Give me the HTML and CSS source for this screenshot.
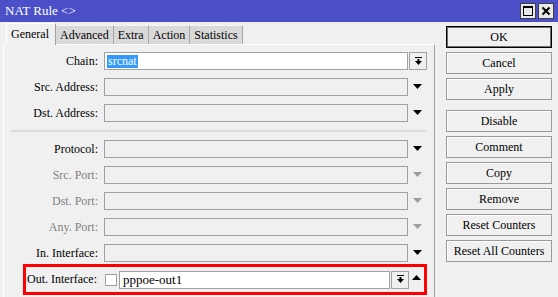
FILE: index.html
```html
<!DOCTYPE html>
<html lang="en">
<head>
    <meta charset="UTF-8">
    <title>NAT Rule</title>
    <link rel="stylesheet" href="styles.css">
</head>
<body>
    <div class="window">
        <div class="titlebar">
            <span class="title">NAT Rule &lt;&gt;</span>
            <div class="win-btns">
                <span class="win-btn"><svg width="12" height="12" viewBox="0 0 12 12"><rect x="1.5" y="1.5" width="9" height="9" fill="none" stroke="#000" stroke-width="1"/><rect x="1" y="1" width="10" height="2" fill="#000"/></svg></span>
                <span class="win-btn"><svg width="12" height="12" viewBox="0 0 12 12"><path d="M2.5 2.5 L9.5 9.5 M9.5 2.5 L2.5 9.5" stroke="#000" stroke-width="2"/></svg></span>
            </div>
        </div>
        <div class="main">
            <div class="left">
                <div class="tabs">
                    <span class="tab active">General</span>
                    <span class="tab">Advanced</span>
                    <span class="tab">Extra</span>
                    <span class="tab">Action</span>
                    <span class="tab">Statistics</span>
                </div>
                <div class="panel">
                    <div class="row">
                        <label class="lbl">Chain:</label>
                        <div class="field active"><span class="sel">srcnat</span></div>
                        <span class="drop-btn"><svg width="9" height="9" viewBox="0 0 9 9"><rect x="1" y="0" width="7" height="1" fill="#000"/><rect x="3.5" y="2" width="2" height="2" fill="#000"/><path d="M1 4 H8 L4.5 8 Z" fill="#000"/></svg></span>
                    </div>
                    <div class="row">
                        <label class="lbl">Src. Address:</label>
                        <div class="field"></div>
                        <span class="arrow"><svg width="9" height="5" viewBox="0 0 9 5"><path d="M0 0 H9 L4.5 5 Z" fill="#000"/></svg></span>
                    </div>
                    <div class="row">
                        <label class="lbl">Dst. Address:</label>
                        <div class="field"></div>
                        <span class="arrow"><svg width="9" height="5" viewBox="0 0 9 5"><path d="M0 0 H9 L4.5 5 Z" fill="#000"/></svg></span>
                    </div>
                    <div class="sep"></div>
                    <div class="row">
                        <label class="lbl">Protocol:</label>
                        <div class="field"></div>
                        <span class="arrow"><svg width="9" height="5" viewBox="0 0 9 5"><path d="M0 0 H9 L4.5 5 Z" fill="#000"/></svg></span>
                    </div>
                    <div class="row">
                        <label class="lbl dim">Src. Port:</label>
                        <div class="field"></div>
                        <span class="arrow"><svg width="9" height="5" viewBox="0 0 9 5"><path d="M0 0 H9 L4.5 5 Z" fill="#9a9e99"/></svg></span>
                    </div>
                    <div class="row">
                        <label class="lbl dim">Dst. Port:</label>
                        <div class="field"></div>
                        <span class="arrow"><svg width="9" height="5" viewBox="0 0 9 5"><path d="M0 0 H9 L4.5 5 Z" fill="#9a9e99"/></svg></span>
                    </div>
                    <div class="row">
                        <label class="lbl dim">Any. Port:</label>
                        <div class="field"></div>
                        <span class="arrow"><svg width="9" height="5" viewBox="0 0 9 5"><path d="M0 0 H9 L4.5 5 Z" fill="#9a9e99"/></svg></span>
                    </div>
                    <div class="row">
                        <label class="lbl">In. Interface:</label>
                        <div class="field"></div>
                        <span class="arrow"><svg width="9" height="5" viewBox="0 0 9 5"><path d="M0 0 H9 L4.5 5 Z" fill="#000"/></svg></span>
                    </div>
                    <div class="highlight">
                        <label class="lbl out">Out. Interface:</label>
                        <span class="check"></span>
                        <div class="field active out-field">pppoe-out1</div>
                        <span class="drop-btn"><svg width="9" height="9" viewBox="0 0 9 9"><rect x="1" y="0" width="7" height="1" fill="#000"/><rect x="3.5" y="2" width="2" height="2" fill="#000"/><path d="M1 4 H8 L4.5 8 Z" fill="#000"/></svg></span>
                        <span class="arrow up"><svg width="9" height="5" viewBox="0 0 9 5"><path d="M0 5 H9 L4.5 0 Z" fill="#000"/></svg></span>
                    </div>
                </div>
            </div>
            <div class="actions">
                <button class="btn default">OK</button>
                <button class="btn">Cancel</button>
                <button class="btn">Apply</button>
                <button class="btn spaced">Disable</button>
                <button class="btn">Comment</button>
                <button class="btn">Copy</button>
                <button class="btn">Remove</button>
                <button class="btn">Reset Counters</button>
                <button class="btn">Reset All Counters</button>
            </div>
        </div>
    </div>
</body>
</html>
```
FILE: styles.css
```css
body {
    margin: 0;
    padding: 0;
    font-family: 'Liberation Serif', 'Times New Roman', serif;
    font-size: 12px;
    color: #000;
    background: #f0f0f0;
}
.window {
    width: 558px;
    height: 297px;
    overflow: hidden;
    background: #f0f0f0;
}
.titlebar {
    height: 22px;
    background: #4b50c8;
    display: flex;
    align-items: center;
    justify-content: space-between;
    padding: 0 4px 0 5px;
    box-sizing: border-box;
}
.title {
    color: #fff;
    font-size: 13px;
}
.win-btns {
    display: flex;
    gap: 2px;
}
.win-btn {
    width: 14px;
    height: 14px;
    background: #e8e8e8;
    border: 1px solid #404040;
    display: flex;
    align-items: center;
    justify-content: center;
}
.main {
    display: flex;
    height: 275px;
}
.left {
    margin-left: 3px;
    width: 432px;
    display: flex;
    flex-direction: column;
}
.tabs {
    display: flex;
    align-items: flex-end;
    height: 22px;
    padding-left: 3px;
}
.tab {
    height: 19px;
    line-height: 19px;
    padding: 0 4px;
    background: #d9d9d9;
    border-right: 1px solid #a8a8a8;
    border-top: 1px solid #f4f4f4;
    box-sizing: border-box;
}
.tab.active {
    height: 22px;
    line-height: 21px;
    margin-bottom: -1px;
    padding: 0 6px 0 4px;
    background: #f0f0f0;
    border-left: 1px solid #fff;
    border-top: 1px solid #fff;
    border-right: 1px solid #a0a0a0;
    position: relative;
    z-index: 1;
}
.panel {
    flex: 1;
    border-top: 1px solid #fff;
    border-left: 1px solid #fff;
    border-right: 1px solid #a0a0a0;
    padding-top: 7px;
    display: flex;
    flex-direction: column;
    gap: 8px;
}
.row {
    display: flex;
    align-items: center;
    height: 18px;
}
.lbl {
    width: 94px;
    flex-shrink: 0;
    text-align: right;
    padding-right: 6px;
    white-space: nowrap;
}
.lbl.dim {
    color: #808080;
}
.field {
    width: 304px;
    height: 18px;
    flex-shrink: 0;
    box-sizing: border-box;
    border: 1px solid #a0a0a0;
    background: #f0f0f0;
    display: flex;
    align-items: center;
    padding-left: 2px;
}
.field.active {
    background: #fff;
}
.sel {
    background: #3399ff;
    color: #fff;
    line-height: 13px;
    padding: 0 1px;
}
.drop-btn {
    width: 18px;
    height: 18px;
    flex-shrink: 0;
    margin-left: 1px;
    box-sizing: border-box;
    border: 1px solid #a0a0a0;
    background: #f0f0f0;
    display: flex;
    align-items: center;
    justify-content: center;
}
.arrow {
    width: 19px;
    height: 18px;
    display: flex;
    align-items: center;
    justify-content: center;
    padding-bottom: 2px;
    box-sizing: border-box;
}
.arrow.up {
    width: auto;
    flex: 1;
    padding-bottom: 4px;
}
.sep {
    margin: 0 8px 0 7px;
    height: 2px;
    background: #dcdcdc;
}
.highlight {
    display: flex;
    align-items: center;
    margin-left: 19px;
    width: 404px;
    height: 31px;
    box-sizing: border-box;
    border: 3px solid #ff0000;
    margin-top: -6px;
}
.lbl.out {
    width: 71px;
    padding-right: 8px;
}
.check {
    width: 12px;
    height: 12px;
    flex-shrink: 0;
    box-sizing: border-box;
    border: 1px solid #a0a0a0;
    background: #fff;
    margin-right: 2px;
}
.out-field {
    width: 271px;
    padding-left: 3px;
    font-size: 13px;
}
.actions {
    margin-left: 11px;
    width: 106px;
    padding-top: 4px;
    display: flex;
    flex-direction: column;
    gap: 4px;
}
.btn {
    height: 22px;
    font-family: inherit;
    font-size: 12px;
    background: #f0f0f0;
    border: 1px solid #999;
    box-shadow: inset 1px 1px 0 #fff;
    padding: 0;
    color: #000;
}
.btn.default {
    border: 1px solid #000;
    box-shadow: inset 0 0 0 1px #707070;
}
.btn.spaced {
    margin-top: 6px;
}
```
